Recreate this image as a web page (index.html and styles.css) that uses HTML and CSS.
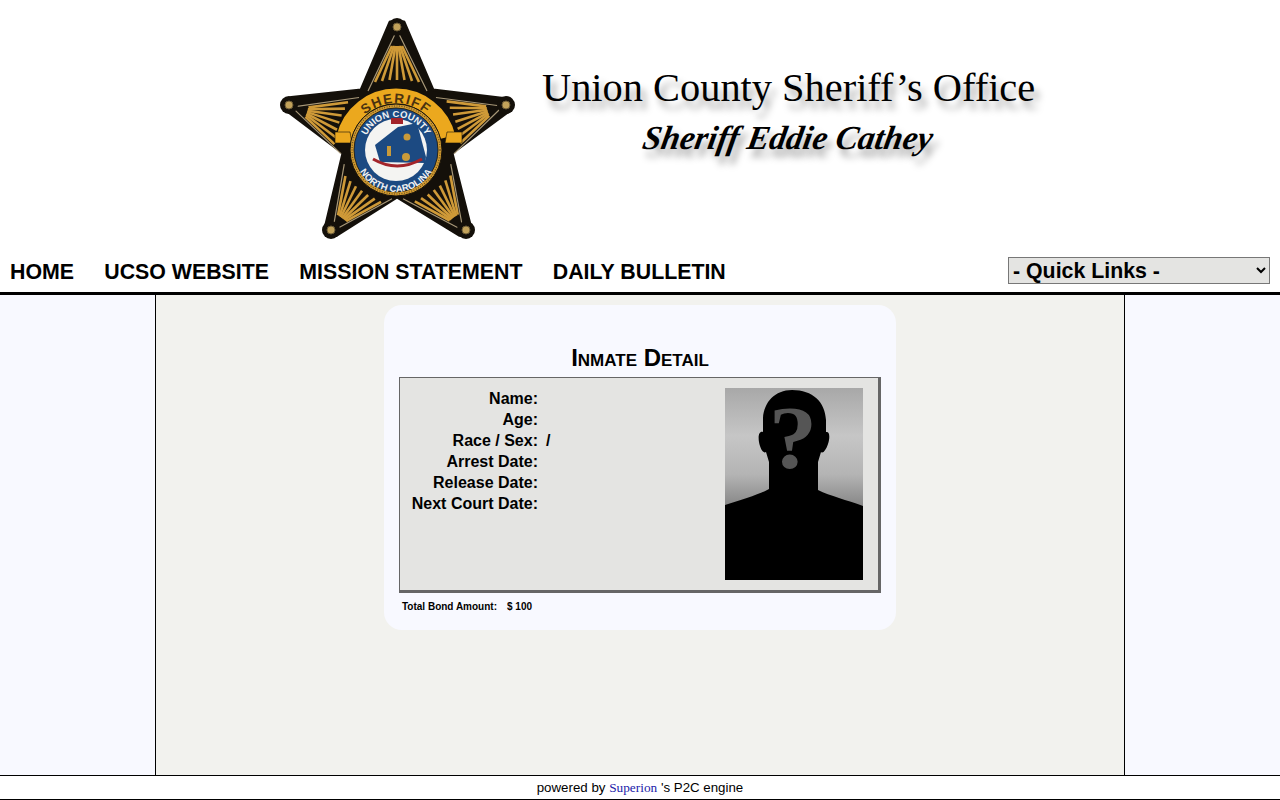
FILE: index.html
```html
<!DOCTYPE html>
<html lang="en">

<head>
    <meta charset="UTF-8">
    <meta name="viewport" content="width=device-width, initial-scale=1.0">
    <title>Inmate Detail</title>
    <link rel="stylesheet" href="styles.css">
</head>

<body>
    <div class="page">
        <header class="banner">
            <svg class="badge" width="260" height="235" viewBox="0 0 260 235">
                <defs>
                    <g id="arm">
                        <path d="M127 20 L98 81 M127 20 L157 81" fill="none" stroke="#a89878" stroke-width="1.2"/>
                        <g stroke="#cf9a38" stroke-width="2.6">
                            <line x1="122" y1="36" x2="105" y2="72"/>
                            <line x1="124" y1="36" x2="112" y2="71"/>
                            <line x1="125.5" y1="36" x2="119.5" y2="70"/>
                            <line x1="127" y1="36" x2="127" y2="70"/>
                            <line x1="128.5" y1="36" x2="134.5" y2="70"/>
                            <line x1="130" y1="36" x2="142" y2="71"/>
                            <line x1="132" y1="36" x2="149" y2="72"/>
                        </g>
                    </g>
                    <path id="top-arc" d="M79 140 A47 47 0 0 1 173 140"/>
                    <path id="upper-arc" d="M93 140 A33 33 0 0 1 159 140"/>
                    <path id="lower-arc" d="M84 140 A42 42 0 0 0 168 140"/>
                </defs>
                <path d="M120 12 L134 12 L163 80 L233.7 88.4 L238.3 101.6 L182 143 L200.6 216.8 L189.4 225.2 L127 187 L66.6 225.2 L55.4 216.8 L73 143 L16.7 100.6 L21.3 87.4 L91 80 Z" fill="#14100a" stroke="#14100a" stroke-width="3" stroke-linejoin="round"/>
                <use href="#arm"/>
                <use href="#arm" transform="rotate(72 127.5 131)"/>
                <use href="#arm" transform="rotate(144 127.5 131)"/>
                <use href="#arm" transform="rotate(216 127.5 131)"/>
                <use href="#arm" transform="rotate(288 127.5 131)"/>
                <g fill="#14100a">
                    <circle cx="127" cy="17" r="9"/>
                    <circle cx="236" cy="95" r="9"/>
                    <circle cx="196" cy="220" r="9"/>
                    <circle cx="61" cy="220" r="9"/>
                    <circle cx="19" cy="95" r="9"/>
                </g>
                <g fill="#c2a25a" stroke="#6b5a35">
                    <circle cx="127" cy="17" r="4"/>
                    <circle cx="236" cy="95" r="4"/>
                    <circle cx="196" cy="220" r="4"/>
                    <circle cx="61" cy="220" r="4"/>
                    <circle cx="19" cy="95" r="4"/>
                </g>
                <path d="M74 127 A53.5 53.5 0 0 1 178 127" fill="none" stroke="#eba81e" stroke-width="15"/>
                <path d="M65 122 L80 122 L82 133 L65 133 Z M192 122 L177 122 L175 133 L192 133 Z" fill="#eba81e" stroke="#14100a" stroke-width="0.6"/>
                <text class="badge-sheriff"><textPath href="#top-arc" startOffset="50%" text-anchor="middle">SHERIFF</textPath></text>
                <circle cx="126" cy="140" r="46" fill="#d09a30" stroke="#14100a" stroke-width="1"/>
                <circle cx="126" cy="140" r="44" fill="none" stroke="#6b5020" stroke-dasharray="1 1.5" stroke-width="1.2"/>
                <circle cx="126" cy="140" r="42" fill="#1c4a82" stroke="#14100a" stroke-width="0.8"/>
                <circle cx="126" cy="140" r="31" fill="#f4f4f2"/>
                <path d="M105 135 L128 117 L147 113 L156 147 L155 153 L110 152 Z" fill="#1c4a82"/>
                <path d="M103 149 Q127 163 152 149" fill="none" stroke="#a3242a" stroke-width="3"/>
                <rect x="121" y="108" width="12" height="6" fill="#a3242a"/>
                <g fill="#c89a3a">
                    <circle cx="137" cy="127" r="3.5"/>
                    <circle cx="136" cy="147" r="4"/>
                    <rect x="117" y="136" width="4" height="10"/>
                </g>
                <text class="badge-ring"><textPath href="#upper-arc" startOffset="50%" text-anchor="middle">UNION COUNTY</textPath></text>
                <text class="badge-ring"><textPath href="#lower-arc" startOffset="50%" text-anchor="middle">NORTH CAROLINA</textPath></text>
            </svg>
            <div class="banner-text">
                <div class="office-name">Union County Sheriff’s Office</div>
                <div class="sheriff-name">Sheriff Eddie Cathey</div>
            </div>
        </header>

        <nav class="topnav">
            <a href="#">HOME</a>
            <a href="#">UCSO WEBSITE</a>
            <a href="#">MISSION STATEMENT</a>
            <a href="#">DAILY BULLETIN</a>
            <select class="quick-links">
                <option>- Quick Links -</option>
            </select>
        </nav>

        <div class="columns">
            <div class="side"></div>
            <main class="center">
                <div class="card">
                    <h1>Inmate Detail</h1>
                    <div class="detail">
                        <div class="fields">
                            <span class="label">Name:</span><span class="value"></span>
                            <span class="label">Age:</span><span class="value"></span>
                            <span class="label">Race / Sex:</span><span class="value">/</span>
                            <span class="label">Arrest Date:</span><span class="value"></span>
                            <span class="label">Release Date:</span><span class="value"></span>
                            <span class="label">Next Court Date:</span><span class="value"></span>
                        </div>
                        <svg class="photo" width="138" height="192" viewBox="0 0 138 192">
                            <defs>
                                <linearGradient id="wall" x1="0" y1="0" x2="0" y2="1">
                                    <stop offset="0" stop-color="#a8a8a8"/>
                                    <stop offset="0.25" stop-color="#c6c6c6"/>
                                    <stop offset="0.45" stop-color="#b4b4b4"/>
                                    <stop offset="0.62" stop-color="#858585"/>
                                </linearGradient>
                                <filter id="soft"><feGaussianBlur stdDeviation="0.6"/></filter>
                            </defs>
                            <rect width="138" height="192" fill="url(#wall)"/>
                            <path filter="url(#soft)" d="M67 2 C88 2 100 14 101 32 L101 44 C105 43 105 50 103 56 C101 62 98 66 96 64 L93 74 L93 102 C105 108 122 112 138 118 L138 192 L0 192 L0 117 C16 112 33 107 44 101 L44 74 L41 64 C38 66 35 60 34 54 C33 48 34 43 38 44 L38 30 C39 14 50 2 67 2 Z" fill="#040404"/>
                            <text class="photo-mark" transform="translate(68 79) scale(1.1 1)" text-anchor="middle">?</text>
                        </svg>
                    </div>
                    <div class="bond">
                        <span>Total Bond Amount:</span>
                        <span>$ 100</span>
                    </div>
                </div>
            </main>
            <div class="side"></div>
        </div>

        <footer class="footer">
            powered by <a href="#">Superion</a> 's P2C engine
        </footer>
    </div>
</body>

</html>
```

FILE: styles.css
```css
body {
    margin: 0;
    font-family: "Liberation Sans", Arial, sans-serif;
    background-color: white;
    color: black;
}

.page {
    height: 800px;
    display: flex;
    flex-direction: column;
    overflow: hidden;
}

.banner {
    height: 250px;
    padding: 10px 0 0 270px;
    box-sizing: border-box;
    display: flex;
}

.badge {
    display: block;
}

.badge-sheriff {
    font-family: "Liberation Sans", sans-serif;
    font-size: 13.5px;
    font-weight: bold;
    letter-spacing: 1.4px;
    fill: #4a3210;
}

.badge-ring {
    font-family: "Liberation Sans", sans-serif;
    font-size: 9.5px;
    font-weight: bold;
    fill: #f2f2f2;
}

.banner-text {
    margin-left: 12px;
    width: 492px;
    text-align: center;
    font-family: "Liberation Serif", "Times New Roman", serif;
}

.office-name {
    margin-top: 53px;
    font-size: 40.4px;
    line-height: 50px;
    white-space: nowrap;
    text-shadow: 5px 8px 7px rgba(0, 0, 0, 0.35);
}

.sheriff-name {
    font-size: 33.5px;
    line-height: 50px;
    font-weight: bold;
    font-style: italic;
    white-space: nowrap;
    transform: skewX(-10deg);
    text-shadow: 6px 8px 7px rgba(0, 0, 0, 0.35);
}

.topnav {
    height: 42px;
    padding: 0 10px;
    display: flex;
    align-items: center;
    gap: 30.3px;
    border-bottom: 3px solid black;
}

.topnav a {
    color: black;
    font-size: 21.33px;
    font-weight: bold;
    text-decoration: none;
    position: relative;
    top: 1px;
}

.quick-links {
    margin-left: auto;
    width: 262px;
    height: 27px;
    margin-top: -1px;
    padding: 0;
    background: #e4e4e2;
    border: 1px solid #777;
    border-radius: 0;
    font-family: "Liberation Sans", Arial, sans-serif;
    font-size: 21.33px;
    font-weight: bold;
    color: black;
}

.columns {
    flex: 1;
    display: flex;
}

.side {
    width: 155px;
    background: #f8f9ff;
}

.center {
    flex: 1;
    padding-top: 10px;
    background: #f2f2ee;
    border-left: 1px solid black;
    border-right: 1px solid black;
}

.card {
    width: 512px;
    height: 325px;
    margin: 0 auto;
    padding: 39px 15px 0;
    box-sizing: border-box;
    background: #f8f9ff;
    border-radius: 18px;
}

h1 {
    margin: 0 0 5px;
    height: 28px;
    font-size: 24px;
    line-height: 28px;
    font-variant: small-caps;
    text-align: center;
}

.detail {
    height: 216px;
    padding: 10px 15px 0 0;
    box-sizing: border-box;
    display: flex;
    justify-content: space-between;
    align-items: flex-start;
    background: #e4e4e2;
    border: 1px solid #666;
    border-right-width: 3px;
    border-bottom-width: 3px;
}

.fields {
    display: grid;
    grid-template-columns: 138px 150px;
    grid-auto-rows: 21px;
    column-gap: 8px;
    font-size: 16px;
    font-weight: bold;
    line-height: 21px;
}

.label {
    text-align: right;
    white-space: nowrap;
}

.photo {
    display: block;
}

.photo-mark {
    font-family: "Liberation Serif", serif;
    font-size: 88px;
    font-weight: bold;
    fill: #555;
}

.bond {
    padding: 8px 0 0 3px;
    display: flex;
    gap: 10px;
    font-size: 10px;
    font-weight: bold;
    line-height: 12px;
}

.footer {
    height: 25px;
    box-sizing: border-box;
    border-top: 1px solid black;
    border-bottom: 1px solid black;
    font-size: 13.3px;
    line-height: 23px;
    text-align: center;
}

.footer a {
    color: #2222aa;
    font-family: "Liberation Serif", serif;
    text-decoration: none;
}
```
